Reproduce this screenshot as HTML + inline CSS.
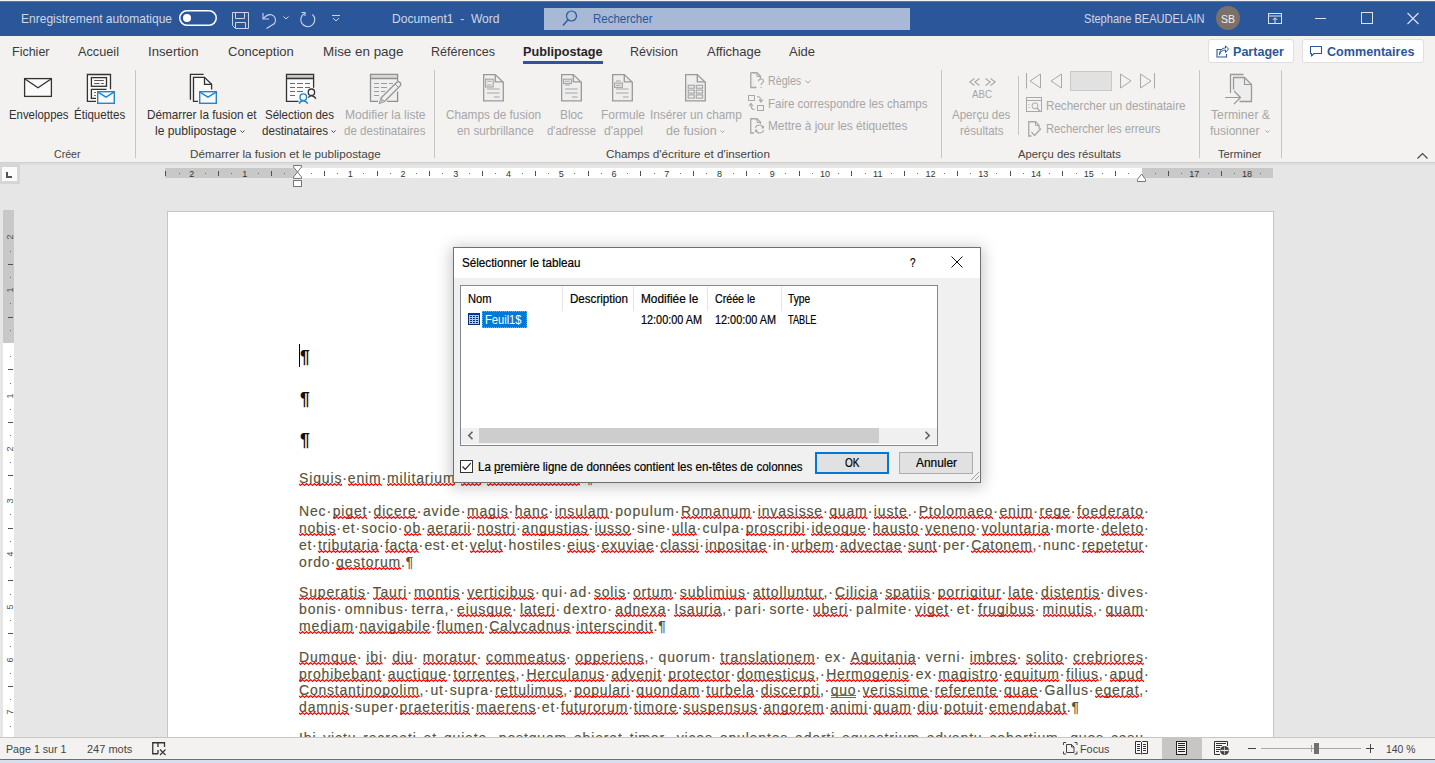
<!DOCTYPE html>
<html><head><meta charset="utf-8"><style>
html,body{margin:0;padding:0;}
body{width:1435px;height:763px;overflow:hidden;position:relative;background:#e6e6e6;font-family:'Liberation Sans', sans-serif;}
svg{overflow:visible;position:absolute}
.ln{position:absolute;left:299px;font-size:14px;line-height:17px;white-space:pre;color:#57533b;letter-spacing:0.85px;-webkit-text-stroke:0.15px #57533b}
.sq{position:relative}
.sqs{position:absolute;left:0;top:13px;width:100%;height:3px;overflow:hidden}
.bl{text-decoration:underline double #3d6fc4;text-decoration-thickness:1px;text-underline-offset:2px}
</style></head><body>
<div style="position:absolute;left:0px;top:0px;width:1435px;height:1px;background:#f2f2f2"></div>
<div style="position:absolute;left:0px;top:1px;width:1435px;height:1px;background:#77726d"></div>
<div style="position:absolute;left:0px;top:2px;width:1435px;height:34px;background:#2b579a"></div>
<div style="position:absolute;left:21.00px;top:12.03px;font-size:13px;line-height:14.937px;white-space:pre;color:#cdd7e7;font-weight:400;transform:scaleX(0.9246);transform-origin:0 0;">Enregistrement automatique</div>
<svg style="position:absolute;left:179px;top:10px;" width="38" height="16" viewBox="0 0 38 16" fill="none"><rect x="0.75" y="0.75" width="36.5" height="14.5" rx="7.25" stroke="#fff" stroke-width="1.5"/><circle cx="8" cy="8" r="4" fill="#fff"/></svg>
<svg style="position:absolute;left:232px;top:12px;" width="17" height="17" viewBox="0 0 17 17" fill="none"><path d="M0.5 0.5H16.5V16.5H3.5L0.5 13.5Z M3.5 0.5V6.5H12.5V0.5 M3.5 16.5V10.5H13.5V16.5" stroke="#c9d5e8" stroke-width="1"/></svg>
<svg style="position:absolute;left:261px;top:11px;" width="18" height="18" viewBox="0 0 18 18" fill="none"><path d="M2 2V8H8" stroke="#c9d5e8" stroke-width="1.1"/><path d="M2.3 7.7C5 4.5 8 3.2 10.5 3.8C14.5 4.8 15.5 9.5 13.5 12.5L5.5 17.5" stroke="#c9d5e8" stroke-width="1.1"/></svg>
<svg style="position:absolute;left:283px;top:16px;" width="6" height="4" viewBox="0 0 6 4" fill="none"><path d="M0.5 0.5L3 3L5.5 0.5" stroke="#c9d5e8" stroke-width="1"/></svg>
<svg style="position:absolute;left:299px;top:11px;" width="18" height="18" viewBox="0 0 18 18" fill="none"><path d="M5.5 2.5 A7 7 0 1 0 13.5 3.5" stroke="#c9d5e8" stroke-width="1.1" fill="none"/><path d="M2.5 1.5H6V5" stroke="#c9d5e8" stroke-width="1.1"/></svg>
<svg style="position:absolute;left:332px;top:15px;" width="9" height="7" viewBox="0 0 9 7" fill="none"><path d="M0 0.5H8 M1 3L4 6L7 3" stroke="#c9d5e8" stroke-width="1"/></svg>
<div style="position:absolute;left:391.50px;top:12.03px;font-size:13px;line-height:14.937px;white-space:pre;color:#cdd7e7;font-weight:400;transform:scaleX(0.9260);transform-origin:0 0;">Document1  -  Word</div>
<div style="position:absolute;left:544px;top:8px;width:366px;height:22px;background:#a7b9d4"></div>
<svg style="position:absolute;left:562px;top:10px;" width="16" height="17" viewBox="0 0 16 17" fill="none"><circle cx="9.5" cy="6" r="5" stroke="#2b579a" stroke-width="1.2"/><path d="M6 9.8L1 15.5" stroke="#2b579a" stroke-width="1.3"/></svg>
<div style="position:absolute;left:593.00px;top:12.03px;font-size:13px;line-height:14.937px;white-space:pre;color:#2b579a;font-weight:400;transform:scaleX(0.8854);transform-origin:0 0;">Rechercher</div>
<div style="position:absolute;left:1084.00px;top:12.03px;font-size:13px;line-height:14.937px;white-space:pre;color:#cdd7e7;font-weight:400;transform:scaleX(0.8507);transform-origin:0 0;">Stephane BEAUDELAIN</div>
<div style="position:absolute;left:1216px;top:6px;width:24px;height:24px;border-radius:12px;background:#7c706a"></div>
<div style="position:absolute;left:1221.00px;top:13.37px;font-size:11px;line-height:12.639px;white-space:pre;color:#f4f0ec;font-weight:400;transform:scaleX(0.9532);transform-origin:0 0;">SB</div>
<svg style="position:absolute;left:1268px;top:13px;" width="14" height="11" viewBox="0 0 14 11" fill="none"><rect x="0.5" y="0.5" width="13" height="10" stroke="#dbe3ef"/><path d="M0.5 3H13.5 M7 10V5 M4.8 7L7 4.8L9.2 7" stroke="#dbe3ef"/></svg>
<div style="position:absolute;left:1315px;top:18px;width:11px;height:1px;background:#dbe3ef"></div>
<div style="position:absolute;left:1361px;top:12px;width:12px;height:12px;border:1px solid #dbe3ef;box-sizing:border-box"></div>
<svg style="position:absolute;left:1407px;top:13px;" width="12" height="11" viewBox="0 0 12 11" fill="none"><path d="M0.5 0L11.5 11M11.5 0L0.5 11" stroke="#dbe3ef" stroke-width="1.1"/></svg>
<div style="position:absolute;left:0px;top:36px;width:1435px;height:126px;background:#f3f2f1"></div>
<div style="position:absolute;left:11.50px;top:44.93px;font-size:13px;line-height:14.937px;white-space:pre;color:#3b3a39;font-weight:400;transform:scaleX(0.9612);transform-origin:0 0;">Fichier</div>
<div style="position:absolute;left:77.50px;top:44.93px;font-size:13px;line-height:14.937px;white-space:pre;color:#3b3a39;font-weight:400;transform:scaleX(0.9780);transform-origin:0 0;">Accueil</div>
<div style="position:absolute;left:147.50px;top:44.93px;font-size:13px;line-height:14.937px;white-space:pre;color:#3b3a39;font-weight:400;transform:scaleX(1.0125);transform-origin:0 0;">Insertion</div>
<div style="position:absolute;left:228.00px;top:44.93px;font-size:13px;line-height:14.937px;white-space:pre;color:#3b3a39;font-weight:400;">Conception</div>
<div style="position:absolute;left:322.50px;top:44.93px;font-size:13px;line-height:14.937px;white-space:pre;color:#3b3a39;font-weight:400;transform:scaleX(1.0312);transform-origin:0 0;">Mise en page</div>
<div style="position:absolute;left:431.00px;top:44.93px;font-size:13px;line-height:14.937px;white-space:pre;color:#3b3a39;font-weight:400;transform:scaleX(0.9626);transform-origin:0 0;">Références</div>
<div style="position:absolute;left:630.00px;top:44.93px;font-size:13px;line-height:14.937px;white-space:pre;color:#3b3a39;font-weight:400;transform:scaleX(0.9627);transform-origin:0 0;">Révision</div>
<div style="position:absolute;left:707.00px;top:44.93px;font-size:13px;line-height:14.937px;white-space:pre;color:#3b3a39;font-weight:400;">Affichage</div>
<div style="position:absolute;left:789.00px;top:44.93px;font-size:13px;line-height:14.937px;white-space:pre;color:#3b3a39;font-weight:400;">Aide</div>
<div style="position:absolute;left:523.30px;top:44.93px;font-size:13px;line-height:14.937px;white-space:pre;color:#262626;font-weight:700;transform:scaleX(0.9740);transform-origin:0 0;">Publipostage</div>
<div style="position:absolute;left:523px;top:61px;width:80px;height:3px;background:#2b579a"></div>
<div style="position:absolute;left:1208px;top:39px;width:86px;height:24px;background:#fff;border:1px solid #e1dfdd;border-radius:3px;box-sizing:border-box"></div>
<div style="position:absolute;left:1302px;top:39px;width:122px;height:24px;background:#fff;border:1px solid #e1dfdd;border-radius:3px;box-sizing:border-box"></div>
<svg style="position:absolute;left:1216px;top:45px;" width="13" height="13" viewBox="0 0 13 13" fill="none"><path d="M5.5 4.5H1V12H10.5V9" stroke="#2b579a" stroke-width="1.1"/><path d="M3.5 10C4 6.5 6.5 5 9.5 5V7.5L12.5 4L9.5 0.8V3C6 3 3.5 5.5 3.5 10Z" stroke="#2b579a" stroke-width="1" stroke-linejoin="round"/></svg>
<div style="position:absolute;left:1233.00px;top:43.57px;font-size:13.5px;line-height:15.511px;white-space:pre;color:#2b579a;font-weight:700;transform:scaleX(0.9310);transform-origin:0 0;">Partager</div>
<svg style="position:absolute;left:1310px;top:46px;" width="12" height="11" viewBox="0 0 12 11" fill="none"><path d="M0.5 0.5H11.5V7.5H4L1.5 10V7.5H0.5Z" stroke="#2b579a" stroke-width="1.1" stroke-linejoin="round"/></svg>
<div style="position:absolute;left:1326.50px;top:43.57px;font-size:13.5px;line-height:15.511px;white-space:pre;color:#2b579a;font-weight:700;transform:scaleX(0.9329);transform-origin:0 0;">Commentaires</div>
<div style="position:absolute;left:135px;top:70px;width:1px;height:88px;background:#c8c6c4"></div>
<div style="position:absolute;left:434px;top:70px;width:1px;height:88px;background:#c8c6c4"></div>
<div style="position:absolute;left:941px;top:70px;width:1px;height:88px;background:#c8c6c4"></div>
<div style="position:absolute;left:1199px;top:70px;width:1px;height:88px;background:#c8c6c4"></div>
<div style="position:absolute;left:1281px;top:70px;width:1px;height:88px;background:#c8c6c4"></div>
<div style="position:absolute;left:1018px;top:76px;width:1px;height:59px;background:#c8c6c4"></div>
<svg style="position:absolute;left:20px;top:70px;" width="40" height="36" viewBox="0 0 40 36" fill="none"><rect x="4.6" y="8.6" width="26.8" height="17.8" fill="#fafafa" stroke="#333" stroke-width="1.3"/><path d="M5 9L18 17.7L31 9" stroke="#333" stroke-width="1.3"/></svg>
<svg style="position:absolute;left:82px;top:70px;" width="40" height="36" viewBox="0 0 40 36" fill="none"><path d="M5.4 4.5H28.5V31.4H5.4Z" fill="#fafafa"/><path d="M14 31.4H5.4V4.5H28.5V19.3" stroke="#333" stroke-width="1.3"/><rect x="9.4" y="7.6" width="15.1" height="8.7" stroke="#333" stroke-width="1.3"/><path d="M12.2 10.5H21.8M12.2 13.5H17.6M19.3 13.5H21.8" stroke="#555" stroke-width="1.2"/><path d="M14 28.3H9.4V19.3H24.5" stroke="#333" stroke-width="1.3"/><path d="M12.2 22.5H13.8M12.2 25.5H13.8" stroke="#555" stroke-width="1.2"/><rect x="15.7" y="21.7" width="16.6" height="11.6" fill="#fafafa" stroke="#1f86d0" stroke-width="1.4"/><path d="M16 22.2L24 27.2L32 22.2" stroke="#1f86d0" stroke-width="1.4"/></svg>
<div style="position:absolute;left:8.50px;top:108.03px;font-size:13px;line-height:14.937px;white-space:pre;color:#323130;font-weight:400;transform:scaleX(0.8756);transform-origin:0 0;">Enveloppes</div>
<div style="position:absolute;left:73.50px;top:108.03px;font-size:13px;line-height:14.937px;white-space:pre;color:#323130;font-weight:400;transform:scaleX(0.8854);transform-origin:0 0;">Étiquettes</div>
<div style="position:absolute;left:53.70px;top:147.81px;font-size:11.5px;line-height:13.213px;white-space:pre;color:#444444;font-weight:400;transform:scaleX(0.9212);transform-origin:0 0;">Créer</div>
<svg style="position:absolute;left:184px;top:70px;" width="40" height="36" viewBox="0 0 40 36" fill="none"><path d="M9.5 7.3H20.5L27.6 14.3V31.4H9.5Z" fill="#fafafa"/><path d="M6.4 29.7V4.3H19.6" stroke="#333" stroke-width="1.3"/><path d="M14 31.4H9.5V7.3H20.5L27.6 14.3V19.5" stroke="#333" stroke-width="1.3" stroke-linejoin="miter"/><path d="M20.5 7.3V14.3H27.6" stroke="#333" stroke-width="1.3"/><rect x="15.7" y="21.7" width="16.6" height="11.6" fill="#fafafa" stroke="#1f86d0" stroke-width="1.4"/><path d="M16 22.2L24 27.2L32 22.2" stroke="#1f86d0" stroke-width="1.4"/></svg>
<svg style="position:absolute;left:280px;top:70px;" width="40" height="36" viewBox="0 0 40 36" fill="none"><rect x="6.5" y="8.5" width="27" height="23" fill="#fafafa"/><rect x="6.5" y="4.5" width="27" height="4" fill="#c8c8c8"/><path d="M18.5 31.4H6.5V4.3H33.6V17.7 M6.5 8.5H33.6" stroke="#333" stroke-width="1.3"/><path d="M10 13.5H15M17 13.5H23M25 13.5H30M10 17.5H15M17 17.5H23M25 17.5H30M10 21.5H15M17 21.5H23M10 25.5H15" stroke="#6a6a6a" stroke-width="1.2"/><circle cx="31.4" cy="22.2" r="3.2" fill="#fafafa" stroke="#333" stroke-width="1.3"/><path d="M28.3 27.6C29.2 26.4 30.2 25.9 31.6 25.9C33.2 25.9 34.8 26.8 35.8 28.8" stroke="#333" stroke-width="1.3"/><circle cx="23.3" cy="27.2" r="3.3" fill="#fafafa" stroke="#1f86d0" stroke-width="1.4"/><path d="M19.1 33.7C20 31.6 21.5 30.7 23.3 30.7C25.1 30.7 26.7 31.6 27.7 33.7" stroke="#1f86d0" stroke-width="1.4"/></svg>
<svg style="position:absolute;left:364px;top:70px;" width="40" height="36" viewBox="0 0 40 36" fill="none"><rect x="6.5" y="8.5" width="27" height="23" fill="#efefef"/><rect x="6.5" y="4.5" width="27" height="4" fill="#d8d8d8"/><path d="M14 31.4H6.5V4.3H33.6V11 M6.5 8.5H33.6 M33.6 21.5V31.4H23" stroke="#8f8f8f" stroke-width="1.3"/><path d="M10 13.5H15M17 13.5H23M25 13.5H29M10 17.5H15M17 17.5H23M10 21.5H15M17 21.5H21M10 25.5H15" stroke="#9c9c9c" stroke-width="1.2"/><path d="M15.3 33.5L17 28L32.5 12.5C33.5 11.5 35 11.5 36 12.5C37 13.5 37 15 36 16L20.5 31.5Z" fill="#efefef" stroke="#8f8f8f" stroke-width="1.1" stroke-linejoin="round"/><path d="M17 28L20.5 31.5 M31 14L34.5 17.5" stroke="#8f8f8f" stroke-width="1"/><path d="M15.3 33.5L17 28L20.5 31.5Z" fill="#bdbdbd"/></svg>
<div style="position:absolute;left:146.50px;top:107.73px;font-size:13px;line-height:14.937px;white-space:pre;color:#323130;font-weight:400;transform:scaleX(0.9020);transform-origin:0 0;">Démarrer la fusion et</div>
<div style="position:absolute;left:155.00px;top:124.03px;font-size:13px;line-height:14.937px;white-space:pre;color:#323130;font-weight:400;transform:scaleX(0.9318);transform-origin:0 0;">le publipostage</div>
<svg style="position:absolute;left:240px;top:130px;" width="5" height="3" viewBox="0 0 5 3" fill="none"><path d="M0.5 0.5L2.5 2.5L4.5 0.5" stroke="#444" stroke-width="1"/></svg>
<div style="position:absolute;left:265.00px;top:107.73px;font-size:13px;line-height:14.937px;white-space:pre;color:#323130;font-weight:400;transform:scaleX(0.8839);transform-origin:0 0;">Sélection des</div>
<div style="position:absolute;left:261.50px;top:124.03px;font-size:13px;line-height:14.937px;white-space:pre;color:#323130;font-weight:400;transform:scaleX(0.8953);transform-origin:0 0;">destinataires</div>
<svg style="position:absolute;left:331px;top:130px;" width="5" height="3" viewBox="0 0 5 3" fill="none"><path d="M0.5 0.5L2.5 2.5L4.5 0.5" stroke="#444" stroke-width="1"/></svg>
<div style="position:absolute;left:344.70px;top:107.73px;font-size:13px;line-height:14.937px;white-space:pre;color:#a6a6a6;font-weight:400;transform:scaleX(0.9285);transform-origin:0 0;">Modifier la liste</div>
<div style="position:absolute;left:343.60px;top:124.03px;font-size:13px;line-height:14.937px;white-space:pre;color:#a6a6a6;font-weight:400;transform:scaleX(0.8880);transform-origin:0 0;">de destinataires</div>
<div style="position:absolute;left:189.70px;top:147.81px;font-size:11.5px;line-height:13.213px;white-space:pre;color:#444444;font-weight:400;transform:scaleX(1.0147);transform-origin:0 0;">Démarrer la fusion et le publipostage</div>
<svg style="position:absolute;left:483.2px;top:74.3px;" width="22" height="28" viewBox="0 0 22 28" fill="none"><path d="M0.65 0.65H12.3L20.3 8.3V26.9H0.65Z" fill="#eeeeee" stroke="#999" stroke-width="1.3" stroke-linejoin="miter"/><path d="M12.3 0.65V7.8H20.3" stroke="#999" stroke-width="1.3"/><rect x="2.6" y="5.2" width="7.6" height="7.8" stroke="#a3a3a3" stroke-width="1.1"/><path d="M4 7.2H8.6M4 11H8.6M4 15H16.6M4 19H16.6M10.9 23H16.6" stroke="#a3a3a3" stroke-width="1.1"/></svg>
<svg style="position:absolute;left:561.2px;top:74.3px;" width="22" height="28" viewBox="0 0 22 28" fill="none"><path d="M0.65 0.65H12.3L20.3 8.3V26.9H0.65Z" fill="#eeeeee" stroke="#999" stroke-width="1.3" stroke-linejoin="miter"/><path d="M12.3 0.65V7.8H20.3" stroke="#999" stroke-width="1.3"/><rect x="2.6" y="5.2" width="7.8" height="4.3" stroke="#a3a3a3" stroke-width="1.1"/><path d="M4 7.2H8.8M4 11H8.8M4 15H16.6M4 19H16.6M10.9 23H16.6" stroke="#a3a3a3" stroke-width="1.1"/></svg>
<svg style="position:absolute;left:612.1px;top:74.3px;" width="22" height="28" viewBox="0 0 22 28" fill="none"><path d="M0.65 0.65H12.3L20.3 8.3V26.9H0.65Z" fill="#eeeeee" stroke="#999" stroke-width="1.3" stroke-linejoin="miter"/><path d="M12.3 0.65V7.8H20.3" stroke="#999" stroke-width="1.3"/><rect x="2.6" y="9.1" width="7.8" height="4.3" stroke="#a3a3a3" stroke-width="1.1"/><path d="M4 7H8.8M4 11.2H8.8M4 15H16.6M4 19H16.6M10.9 23H16.6" stroke="#a3a3a3" stroke-width="1.1"/></svg>
<svg style="position:absolute;left:685.1px;top:74.3px;" width="22" height="28" viewBox="0 0 22 28" fill="none"><path d="M0.65 0.65H12.3L20.3 8.3V26.9H0.65Z" fill="#eeeeee" stroke="#999" stroke-width="1.3" stroke-linejoin="miter"/><path d="M12.3 0.65V7.8H20.3" stroke="#999" stroke-width="1.3"/><rect x="3.2" y="11.3" width="6.1" height="2.9" stroke="#a3a3a3" stroke-width="1.1"/><rect x="11.3" y="11.3" width="6.3" height="2.9" stroke="#a3a3a3" stroke-width="1.1"/><rect x="3.2" y="16.1" width="6.1" height="3" stroke="#a3a3a3" stroke-width="1.1"/><rect x="11.3" y="16.1" width="6.3" height="3" stroke="#a3a3a3" stroke-width="1.1"/><rect x="3.2" y="20.9" width="6.1" height="3.2" stroke="#a3a3a3" stroke-width="1.1"/><rect x="11.3" y="20.9" width="6.3" height="3.2" stroke="#a3a3a3" stroke-width="1.1"/></svg>
<div style="position:absolute;left:446.40px;top:107.73px;font-size:13px;line-height:14.937px;white-space:pre;color:#a6a6a6;font-weight:400;transform:scaleX(0.9067);transform-origin:0 0;">Champs de fusion</div>
<div style="position:absolute;left:456.50px;top:124.03px;font-size:13px;line-height:14.937px;white-space:pre;color:#a6a6a6;font-weight:400;transform:scaleX(0.9072);transform-origin:0 0;">en surbrillance</div>
<div style="position:absolute;left:560.00px;top:107.73px;font-size:13px;line-height:14.937px;white-space:pre;color:#a6a6a6;font-weight:400;transform:scaleX(0.9092);transform-origin:0 0;">Bloc</div>
<div style="position:absolute;left:547.00px;top:124.03px;font-size:13px;line-height:14.937px;white-space:pre;color:#a6a6a6;font-weight:400;transform:scaleX(0.8755);transform-origin:0 0;">d&#x27;adresse</div>
<div style="position:absolute;left:601.00px;top:107.73px;font-size:13px;line-height:14.937px;white-space:pre;color:#a6a6a6;font-weight:400;transform:scaleX(0.9227);transform-origin:0 0;">Formule</div>
<div style="position:absolute;left:604.00px;top:124.03px;font-size:13px;line-height:14.937px;white-space:pre;color:#a6a6a6;font-weight:400;transform:scaleX(0.9391);transform-origin:0 0;">d&#x27;appel</div>
<div style="position:absolute;left:650.00px;top:107.73px;font-size:13px;line-height:14.937px;white-space:pre;color:#a6a6a6;font-weight:400;transform:scaleX(0.9064);transform-origin:0 0;">Insérer un champ</div>
<div style="position:absolute;left:666.00px;top:124.03px;font-size:13px;line-height:14.937px;white-space:pre;color:#a6a6a6;font-weight:400;transform:scaleX(0.9627);transform-origin:0 0;">de fusion</div>
<svg style="position:absolute;left:720px;top:130px;" width="5" height="3" viewBox="0 0 5 3" fill="none"><path d="M0.5 0.5L2.5 2.5L4.5 0.5" stroke="#a6a6a6" stroke-width="1"/></svg>
<div style="position:absolute;left:606.40px;top:147.81px;font-size:11.5px;line-height:13.213px;white-space:pre;color:#444444;font-weight:400;transform:scaleX(1.0180);transform-origin:0 0;">Champs d&#x27;écriture et d&#x27;insertion</div>
<svg style="position:absolute;left:750px;top:72px;" width="14" height="17" viewBox="0 0 14 17" fill="none"><path d="M0.75 0.75H7L10.5 4.25V7 M6.5 15.5H0.75V0.75" stroke="#a8a8a8" stroke-width="1.3" fill="#ececec"/><path d="M7 0.75V4.5H10.5" stroke="#a8a8a8"/><path d="M8.5 9.5C8.5 7.8 9.5 7 11 7C12.5 7 13.5 7.8 13.5 9C13.5 10.8 11 11 11 13 M11 15V16" stroke="#a8a8a8" stroke-width="1.1"/></svg>
<div style="position:absolute;left:767.50px;top:73.73px;font-size:13px;line-height:14.937px;white-space:pre;color:#a6a6a6;font-weight:400;transform:scaleX(0.8204);transform-origin:0 0;">Règles</div>
<svg style="position:absolute;left:805px;top:80px;" width="6" height="4" viewBox="0 0 6 4" fill="none"><path d="M0.5 0.5L3 3L5.5 0.5" stroke="#a6a6a6"/></svg>
<svg style="position:absolute;left:748px;top:95px;" width="17" height="17" viewBox="0 0 17 17" fill="none"><rect x="0.5" y="0.5" width="6" height="5" stroke="#a8a8a8"/><rect x="9.5" y="10.5" width="6" height="5" stroke="#a8a8a8"/><path d="M9 1.5C12 1.5 13 3 13 6.5 M11 4.5L13 7L15 4.5 M6.5 14.5C3.5 14.5 3 12.5 3 9.5 M1 11L3 8.5L5 11" stroke="#a8a8a8" stroke-width="1.1"/></svg>
<div style="position:absolute;left:767.50px;top:96.73px;font-size:13px;line-height:14.937px;white-space:pre;color:#a6a6a6;font-weight:400;transform:scaleX(0.8901);transform-origin:0 0;">Faire correspondre les champs</div>
<svg style="position:absolute;left:750px;top:118px;" width="15" height="16" viewBox="0 0 15 16" fill="none"><path d="M4 15H0.75V0.75H7L10.5 4.25V6" stroke="#a8a8a8" stroke-width="1.3"/><path d="M7 0.75V4.5H10.5" stroke="#a8a8a8"/><path d="M5.5 10C5.8 8 7.3 7 9.3 7C11 7 12.5 8 13 9.5 M13.5 8V10H11.5 M13.5 12C13.2 14 11.7 15 9.7 15C8 15 6.5 14 6 12.5 M5.5 14V12H7.5" stroke="#a8a8a8" stroke-width="1.1"/></svg>
<div style="position:absolute;left:767.50px;top:119.43px;font-size:13px;line-height:14.937px;white-space:pre;color:#a6a6a6;font-weight:400;transform:scaleX(0.9093);transform-origin:0 0;">Mettre à jour les étiquettes</div>
<svg style="position:absolute;left:969px;top:78px;" width="27" height="8" viewBox="0 0 27 8" fill="none"><path d="M5.5 0.5L0.8 4L5.5 7.5M10.5 0.5L5.8 4L10.5 7.5M16.5 0.5L21.2 4L16.5 7.5M21.5 0.5L26.2 4L21.5 7.5" stroke="#a8a8a8" stroke-width="1.1"/></svg>
<div style="position:absolute;left:972.00px;top:87.67px;font-size:11px;line-height:12.639px;white-space:pre;color:#a6a6a6;font-weight:400;transform:scaleX(0.8840);transform-origin:0 0;">ABC</div>
<div style="position:absolute;left:952.30px;top:107.53px;font-size:13px;line-height:14.937px;white-space:pre;color:#a6a6a6;font-weight:400;transform:scaleX(0.8880);transform-origin:0 0;">Aperçu des</div>
<div style="position:absolute;left:960.30px;top:123.53px;font-size:13px;line-height:14.937px;white-space:pre;color:#a6a6a6;font-weight:400;transform:scaleX(0.8852);transform-origin:0 0;">résultats</div>
<svg style="position:absolute;left:1026px;top:73px;" width="16" height="16" viewBox="0 0 16 16" fill="none"><path d="M0.5 0V15.5" stroke="#a8a8a8"/><path d="M14.5 1L4 8L14.5 15Z" stroke="#a8a8a8" stroke-linejoin="round"/></svg>
<svg style="position:absolute;left:1050px;top:73px;" width="13" height="16" viewBox="0 0 13 16" fill="none"><path d="M11.5 1L1 8L11.5 15Z" stroke="#a8a8a8" stroke-linejoin="round"/></svg>
<div style="position:absolute;left:1070px;top:71px;width:42px;height:20px;background:#e1e1e1;border:1px solid #c8c8c8;box-sizing:border-box"></div>
<svg style="position:absolute;left:1120px;top:73px;" width="12" height="16" viewBox="0 0 12 16" fill="none"><path d="M0.5 1L11 8L0.5 15Z" stroke="#a8a8a8" stroke-linejoin="round"/></svg>
<svg style="position:absolute;left:1140px;top:73px;" width="16" height="16" viewBox="0 0 16 16" fill="none"><path d="M0.5 1L11 8L0.5 15Z" stroke="#a8a8a8" stroke-linejoin="round"/><path d="M14.5 0V15.5" stroke="#a8a8a8"/></svg>
<svg style="position:absolute;left:1026px;top:97px;" width="17" height="17" viewBox="0 0 17 17" fill="none"><rect x="0.5" y="0.5" width="15" height="14" stroke="#a8a8a8"/><path d="M0.5 3.5H15.5 M3 7V8 M3 10V11" stroke="#a8a8a8"/><circle cx="9" cy="8.8" r="3" stroke="#a8a8a8"/><path d="M11.2 11L14.5 14.8" stroke="#a8a8a8" stroke-width="1.2"/></svg>
<div style="position:absolute;left:1045.50px;top:98.53px;font-size:13px;line-height:14.937px;white-space:pre;color:#a6a6a6;font-weight:400;transform:scaleX(0.8937);transform-origin:0 0;">Rechercher un destinataire</div>
<svg style="position:absolute;left:1028px;top:121px;" width="14" height="17" viewBox="0 0 14 17" fill="none"><path d="M3.5 15H0.75V0.75H7.5L11 4.25V8" stroke="#a8a8a8" stroke-width="1.3"/><path d="M7.5 0.75V4.5H11" stroke="#a8a8a8"/><path d="M3.5 11L6.5 14.5L13 7.5" stroke="#a8a8a8" stroke-width="1.2"/></svg>
<div style="position:absolute;left:1045.50px;top:122.43px;font-size:13px;line-height:14.937px;white-space:pre;color:#a6a6a6;font-weight:400;transform:scaleX(0.8645);transform-origin:0 0;">Rechercher les erreurs</div>
<div style="position:absolute;left:1018.30px;top:147.81px;font-size:11.5px;line-height:13.213px;white-space:pre;color:#444444;font-weight:400;transform:scaleX(0.9815);transform-origin:0 0;">Aperçu des résultats</div>
<svg style="position:absolute;left:1220px;top:70px;" width="34" height="36" viewBox="0 0 34 36" fill="none"><path d="M13.5 19.5V7.5H24.5L31.5 14.5V31.5H19.5" fill="#ededed" stroke="#999" stroke-width="1.3" stroke-linejoin="miter"/><path d="M10.5 23V4.5H23.5" stroke="#999" stroke-width="1.3"/><path d="M24.5 7.5V14.5H31.5" stroke="#999" stroke-width="1.2"/><path d="M5 27.5H21 M14 21L20.5 27.5L14 34" stroke="#999" stroke-width="1.2"/></svg>
<div style="position:absolute;left:1211.00px;top:108.03px;font-size:13px;line-height:14.937px;white-space:pre;color:#a6a6a6;font-weight:400;transform:scaleX(0.9386);transform-origin:0 0;">Terminer &amp;</div>
<div style="position:absolute;left:1210.00px;top:123.63px;font-size:13px;line-height:14.937px;white-space:pre;color:#a6a6a6;font-weight:400;transform:scaleX(0.9236);transform-origin:0 0;">fusionner</div>
<svg style="position:absolute;left:1265px;top:130px;" width="5" height="3" viewBox="0 0 5 3" fill="none"><path d="M0.5 0.5L2.5 2.5L4.5 0.5" stroke="#a6a6a6"/></svg>
<div style="position:absolute;left:1218.40px;top:148.11px;font-size:11.5px;line-height:13.213px;white-space:pre;color:#444444;font-weight:400;transform:scaleX(0.9746);transform-origin:0 0;">Terminer</div>
<svg style="position:absolute;left:1417px;top:153px;" width="11" height="6" viewBox="0 0 11 6" fill="none"><path d="M0.5 5.5L5.5 0.5L10.5 5.5" stroke="#444" stroke-width="1.1"/></svg>
<div style="position:absolute;left:0px;top:162px;width:1435px;height:1px;background:#d2d1d0"></div>
<div style="position:absolute;left:0px;top:163px;width:1435px;height:2px;background:#dedddc"></div>
<div style="position:absolute;left:0px;top:163px;width:20px;height:21px;background:#d6d6d6"></div>
<div style="position:absolute;left:2px;top:167px;width:15px;height:14px;background:#fbfbfb"></div>
<div style="position:absolute;left:6px;top:172px;width:2px;height:6px;background:#555"></div>
<div style="position:absolute;left:6px;top:176px;width:6px;height:2px;background:#555"></div>
<div style="position:absolute;left:165px;top:168px;width:132px;height:10px;background:#c8c8c8"></div>
<div style="position:absolute;left:297px;top:168px;width:845px;height:10px;background:#fff"></div>
<div style="position:absolute;left:1142px;top:168px;width:131px;height:10px;background:#c8c8c8"></div>
<div style="position:absolute;left:165px;top:171px;width:1px;height:5px;background:#505050"></div>
<div style="position:absolute;left:178.5px;top:172.5px;width:1.6px;height:1.6px;background:#707070"></div>
<div style="position:absolute;left:189.37px;top:168.71px;font-size:9px;line-height:10.341px;white-space:pre;color:#333;font-weight:400;">2</div>
<div style="position:absolute;left:204.5px;top:172.5px;width:1.6px;height:1.6px;background:#707070"></div>
<div style="position:absolute;left:218px;top:171px;width:1px;height:5px;background:#505050"></div>
<div style="position:absolute;left:230.5px;top:172.5px;width:1.6px;height:1.6px;background:#707070"></div>
<div style="position:absolute;left:242.13px;top:168.71px;font-size:9px;line-height:10.341px;white-space:pre;color:#333;font-weight:400;">1</div>
<div style="position:absolute;left:257.5px;top:172.5px;width:1.6px;height:1.6px;background:#707070"></div>
<div style="position:absolute;left:271px;top:171px;width:1px;height:5px;background:#505050"></div>
<div style="position:absolute;left:283.5px;top:172.5px;width:1.6px;height:1.6px;background:#707070"></div>
<div style="position:absolute;left:310.5px;top:172.5px;width:1.6px;height:1.6px;background:#707070"></div>
<div style="position:absolute;left:324px;top:171px;width:1px;height:5px;background:#505050"></div>
<div style="position:absolute;left:336.5px;top:172.5px;width:1.6px;height:1.6px;background:#707070"></div>
<div style="position:absolute;left:347.65px;top:168.71px;font-size:9px;line-height:10.341px;white-space:pre;color:#333;font-weight:400;">1</div>
<div style="position:absolute;left:362.5px;top:172.5px;width:1.6px;height:1.6px;background:#707070"></div>
<div style="position:absolute;left:377px;top:171px;width:1px;height:5px;background:#505050"></div>
<div style="position:absolute;left:389.5px;top:172.5px;width:1.6px;height:1.6px;background:#707070"></div>
<div style="position:absolute;left:400.41px;top:168.71px;font-size:9px;line-height:10.341px;white-space:pre;color:#333;font-weight:400;">2</div>
<div style="position:absolute;left:415.5px;top:172.5px;width:1.6px;height:1.6px;background:#707070"></div>
<div style="position:absolute;left:429px;top:171px;width:1px;height:5px;background:#505050"></div>
<div style="position:absolute;left:441.5px;top:172.5px;width:1.6px;height:1.6px;background:#707070"></div>
<div style="position:absolute;left:453.17px;top:168.71px;font-size:9px;line-height:10.341px;white-space:pre;color:#333;font-weight:400;">3</div>
<div style="position:absolute;left:468.5px;top:172.5px;width:1.6px;height:1.6px;background:#707070"></div>
<div style="position:absolute;left:482px;top:171px;width:1px;height:5px;background:#505050"></div>
<div style="position:absolute;left:494.5px;top:172.5px;width:1.6px;height:1.6px;background:#707070"></div>
<div style="position:absolute;left:505.93px;top:168.71px;font-size:9px;line-height:10.341px;white-space:pre;color:#333;font-weight:400;">4</div>
<div style="position:absolute;left:521.5px;top:172.5px;width:1.6px;height:1.6px;background:#707070"></div>
<div style="position:absolute;left:535px;top:171px;width:1px;height:5px;background:#505050"></div>
<div style="position:absolute;left:547.5px;top:172.5px;width:1.6px;height:1.6px;background:#707070"></div>
<div style="position:absolute;left:558.69px;top:168.71px;font-size:9px;line-height:10.341px;white-space:pre;color:#333;font-weight:400;">5</div>
<div style="position:absolute;left:573.5px;top:172.5px;width:1.6px;height:1.6px;background:#707070"></div>
<div style="position:absolute;left:588px;top:171px;width:1px;height:5px;background:#505050"></div>
<div style="position:absolute;left:600.5px;top:172.5px;width:1.6px;height:1.6px;background:#707070"></div>
<div style="position:absolute;left:611.45px;top:168.71px;font-size:9px;line-height:10.341px;white-space:pre;color:#333;font-weight:400;">6</div>
<div style="position:absolute;left:626.5px;top:172.5px;width:1.6px;height:1.6px;background:#707070"></div>
<div style="position:absolute;left:640px;top:171px;width:1px;height:5px;background:#505050"></div>
<div style="position:absolute;left:653.5px;top:172.5px;width:1.6px;height:1.6px;background:#707070"></div>
<div style="position:absolute;left:664.21px;top:168.71px;font-size:9px;line-height:10.341px;white-space:pre;color:#333;font-weight:400;">7</div>
<div style="position:absolute;left:679.5px;top:172.5px;width:1.6px;height:1.6px;background:#707070"></div>
<div style="position:absolute;left:693px;top:171px;width:1px;height:5px;background:#505050"></div>
<div style="position:absolute;left:705.5px;top:172.5px;width:1.6px;height:1.6px;background:#707070"></div>
<div style="position:absolute;left:716.97px;top:168.71px;font-size:9px;line-height:10.341px;white-space:pre;color:#333;font-weight:400;">8</div>
<div style="position:absolute;left:732.5px;top:172.5px;width:1.6px;height:1.6px;background:#707070"></div>
<div style="position:absolute;left:746px;top:171px;width:1px;height:5px;background:#505050"></div>
<div style="position:absolute;left:758.5px;top:172.5px;width:1.6px;height:1.6px;background:#707070"></div>
<div style="position:absolute;left:769.73px;top:168.71px;font-size:9px;line-height:10.341px;white-space:pre;color:#333;font-weight:400;">9</div>
<div style="position:absolute;left:784.5px;top:172.5px;width:1.6px;height:1.6px;background:#707070"></div>
<div style="position:absolute;left:799px;top:171px;width:1px;height:5px;background:#505050"></div>
<div style="position:absolute;left:811.5px;top:172.5px;width:1.6px;height:1.6px;background:#707070"></div>
<div style="position:absolute;left:819.99px;top:168.71px;font-size:9px;line-height:10.341px;white-space:pre;color:#333;font-weight:400;">10</div>
<div style="position:absolute;left:837.5px;top:172.5px;width:1.6px;height:1.6px;background:#707070"></div>
<div style="position:absolute;left:851px;top:171px;width:1px;height:5px;background:#505050"></div>
<div style="position:absolute;left:864.5px;top:172.5px;width:1.6px;height:1.6px;background:#707070"></div>
<div style="position:absolute;left:873.09px;top:168.71px;font-size:9px;line-height:10.341px;white-space:pre;color:#333;font-weight:400;">11</div>
<div style="position:absolute;left:890.5px;top:172.5px;width:1.6px;height:1.6px;background:#707070"></div>
<div style="position:absolute;left:904px;top:171px;width:1px;height:5px;background:#505050"></div>
<div style="position:absolute;left:916.5px;top:172.5px;width:1.6px;height:1.6px;background:#707070"></div>
<div style="position:absolute;left:925.51px;top:168.71px;font-size:9px;line-height:10.341px;white-space:pre;color:#333;font-weight:400;">12</div>
<div style="position:absolute;left:943.5px;top:172.5px;width:1.6px;height:1.6px;background:#707070"></div>
<div style="position:absolute;left:957px;top:171px;width:1px;height:5px;background:#505050"></div>
<div style="position:absolute;left:969.5px;top:172.5px;width:1.6px;height:1.6px;background:#707070"></div>
<div style="position:absolute;left:978.27px;top:168.71px;font-size:9px;line-height:10.341px;white-space:pre;color:#333;font-weight:400;">13</div>
<div style="position:absolute;left:995.5px;top:172.5px;width:1.6px;height:1.6px;background:#707070"></div>
<div style="position:absolute;left:1010px;top:171px;width:1px;height:5px;background:#505050"></div>
<div style="position:absolute;left:1022.5px;top:172.5px;width:1.6px;height:1.6px;background:#707070"></div>
<div style="position:absolute;left:1031.03px;top:168.71px;font-size:9px;line-height:10.341px;white-space:pre;color:#333;font-weight:400;">14</div>
<div style="position:absolute;left:1048.5px;top:172.5px;width:1.6px;height:1.6px;background:#707070"></div>
<div style="position:absolute;left:1062px;top:171px;width:1px;height:5px;background:#505050"></div>
<div style="position:absolute;left:1075.5px;top:172.5px;width:1.6px;height:1.6px;background:#707070"></div>
<div style="position:absolute;left:1083.79px;top:168.71px;font-size:9px;line-height:10.341px;white-space:pre;color:#333;font-weight:400;">15</div>
<div style="position:absolute;left:1101.5px;top:172.5px;width:1.6px;height:1.6px;background:#707070"></div>
<div style="position:absolute;left:1115px;top:171px;width:1px;height:5px;background:#505050"></div>
<div style="position:absolute;left:1127.5px;top:172.5px;width:1.6px;height:1.6px;background:#707070"></div>
<div style="position:absolute;left:1154.5px;top:172.5px;width:1.6px;height:1.6px;background:#707070"></div>
<div style="position:absolute;left:1168px;top:171px;width:1px;height:5px;background:#505050"></div>
<div style="position:absolute;left:1180.5px;top:172.5px;width:1.6px;height:1.6px;background:#707070"></div>
<div style="position:absolute;left:1189.31px;top:168.71px;font-size:9px;line-height:10.341px;white-space:pre;color:#333;font-weight:400;">17</div>
<div style="position:absolute;left:1207.5px;top:172.5px;width:1.6px;height:1.6px;background:#707070"></div>
<div style="position:absolute;left:1221px;top:171px;width:1px;height:5px;background:#505050"></div>
<div style="position:absolute;left:1233.5px;top:172.5px;width:1.6px;height:1.6px;background:#707070"></div>
<div style="position:absolute;left:1242.07px;top:168.71px;font-size:9px;line-height:10.341px;white-space:pre;color:#333;font-weight:400;">18</div>
<div style="position:absolute;left:1259.5px;top:172.5px;width:1.6px;height:1.6px;background:#707070"></div>
<svg style="position:absolute;left:293px;top:165px;" width="10" height="23" viewBox="0 0 10 23" fill="none"><path d="M0.5 0.5H8.5V2L4.5 7L8.5 12V13.5H0.5V12L4.5 7L0.5 2Z" fill="#fff" stroke="#777"/><rect x="0.5" y="15.5" width="8" height="6" fill="#fff" stroke="#777"/></svg>
<svg style="position:absolute;left:1137px;top:173px;" width="10" height="9" viewBox="0 0 10 9" fill="none"><path d="M0.5 8.5V6.5L4.5 1L8.5 6.5V8.5Z" fill="#fff" stroke="#777"/></svg>
<div style="position:absolute;left:3px;top:210px;width:11px;height:133px;background:#c8c8c8"></div>
<div style="position:absolute;left:3px;top:343px;width:11px;height:400px;background:#fff"></div>
<div style="position:absolute;left:-0.40000000000000036px;top:231.48000000000002px;width:20px;height:12px;line-height:12px;font-size:9px;text-align:center;color:#505050;transform:rotate(-90deg)">2</div>
<div style="position:absolute;left:9.5px;top:250.7px;width:1.6px;height:1.6px;background:#707070"></div>
<div style="position:absolute;left:8px;top:264px;width:5px;height:1px;background:#505050"></div>
<div style="position:absolute;left:9.5px;top:276.7px;width:1.6px;height:1.6px;background:#707070"></div>
<div style="position:absolute;left:-0.40000000000000036px;top:284.24px;width:20px;height:12px;line-height:12px;font-size:9px;text-align:center;color:#505050;transform:rotate(-90deg)">1</div>
<div style="position:absolute;left:9.5px;top:302.7px;width:1.6px;height:1.6px;background:#707070"></div>
<div style="position:absolute;left:8px;top:317px;width:5px;height:1px;background:#505050"></div>
<div style="position:absolute;left:9.5px;top:329.7px;width:1.6px;height:1.6px;background:#707070"></div>
<div style="position:absolute;left:9.5px;top:355.7px;width:1.6px;height:1.6px;background:#707070"></div>
<div style="position:absolute;left:8px;top:369px;width:5px;height:1px;background:#505050"></div>
<div style="position:absolute;left:9.5px;top:382.7px;width:1.6px;height:1.6px;background:#707070"></div>
<div style="position:absolute;left:-0.40000000000000036px;top:389.76px;width:20px;height:12px;line-height:12px;font-size:9px;text-align:center;color:#505050;transform:rotate(-90deg)">1</div>
<div style="position:absolute;left:9.5px;top:408.7px;width:1.6px;height:1.6px;background:#707070"></div>
<div style="position:absolute;left:8px;top:422px;width:5px;height:1px;background:#505050"></div>
<div style="position:absolute;left:9.5px;top:434.7px;width:1.6px;height:1.6px;background:#707070"></div>
<div style="position:absolute;left:-0.40000000000000036px;top:442.52px;width:20px;height:12px;line-height:12px;font-size:9px;text-align:center;color:#505050;transform:rotate(-90deg)">2</div>
<div style="position:absolute;left:9.5px;top:461.7px;width:1.6px;height:1.6px;background:#707070"></div>
<div style="position:absolute;left:8px;top:475px;width:5px;height:1px;background:#505050"></div>
<div style="position:absolute;left:9.5px;top:487.7px;width:1.6px;height:1.6px;background:#707070"></div>
<div style="position:absolute;left:-0.40000000000000036px;top:495.28px;width:20px;height:12px;line-height:12px;font-size:9px;text-align:center;color:#505050;transform:rotate(-90deg)">3</div>
<div style="position:absolute;left:9.5px;top:513.7px;width:1.6px;height:1.6px;background:#707070"></div>
<div style="position:absolute;left:8px;top:528px;width:5px;height:1px;background:#505050"></div>
<div style="position:absolute;left:9.5px;top:540.7px;width:1.6px;height:1.6px;background:#707070"></div>
<div style="position:absolute;left:-0.40000000000000036px;top:548.04px;width:20px;height:12px;line-height:12px;font-size:9px;text-align:center;color:#505050;transform:rotate(-90deg)">4</div>
<div style="position:absolute;left:9.5px;top:566.7px;width:1.6px;height:1.6px;background:#707070"></div>
<div style="position:absolute;left:8px;top:580px;width:5px;height:1px;background:#505050"></div>
<div style="position:absolute;left:9.5px;top:593.7px;width:1.6px;height:1.6px;background:#707070"></div>
<div style="position:absolute;left:-0.40000000000000036px;top:600.8px;width:20px;height:12px;line-height:12px;font-size:9px;text-align:center;color:#505050;transform:rotate(-90deg)">5</div>
<div style="position:absolute;left:9.5px;top:619.7px;width:1.6px;height:1.6px;background:#707070"></div>
<div style="position:absolute;left:8px;top:633px;width:5px;height:1px;background:#505050"></div>
<div style="position:absolute;left:9.5px;top:645.7px;width:1.6px;height:1.6px;background:#707070"></div>
<div style="position:absolute;left:-0.40000000000000036px;top:653.56px;width:20px;height:12px;line-height:12px;font-size:9px;text-align:center;color:#505050;transform:rotate(-90deg)">6</div>
<div style="position:absolute;left:9.5px;top:672.7px;width:1.6px;height:1.6px;background:#707070"></div>
<div style="position:absolute;left:8px;top:686px;width:5px;height:1px;background:#505050"></div>
<div style="position:absolute;left:9.5px;top:698.7px;width:1.6px;height:1.6px;background:#707070"></div>
<div style="position:absolute;left:-0.40000000000000036px;top:706.3199999999999px;width:20px;height:12px;line-height:12px;font-size:9px;text-align:center;color:#505050;transform:rotate(-90deg)">7</div>
<div style="position:absolute;left:9.5px;top:725.7px;width:1.6px;height:1.6px;background:#707070"></div>
<div style="position:absolute;left:167px;top:211px;width:1107px;height:600px;background:#fff;border:1px solid #c6c6c6;box-sizing:border-box"></div>
<div style="position:absolute;left:299px;top:344px;width:1px;height:23px;background:#000"></div>
<div style="position:absolute;left:299.50px;top:346.00px;font-size:19px;line-height:21.831px;white-space:pre;color:#111;font-weight:700;transform:scaleX(0.9264);transform-origin:0 0;">¶</div>
<div style="position:absolute;left:299.50px;top:388.00px;font-size:19px;line-height:21.831px;white-space:pre;color:#111;font-weight:700;transform:scaleX(0.9264);transform-origin:0 0;">¶</div>
<div style="position:absolute;left:299.50px;top:429.30px;font-size:19px;line-height:21.831px;white-space:pre;color:#111;font-weight:700;transform:scaleX(0.9264);transform-origin:0 0;">¶</div>
<svg width="0" height="0" style="position:absolute"><defs><pattern id="zz" x="0" y="0" width="4" height="3" patternUnits="userSpaceOnUse"><path d="M-0.5 0.5L1.5 2.5L3.5 0.5L5.5 2.5" stroke="#f00" stroke-width="1.1" fill="none"/></pattern></defs></svg>
<div style="position:absolute;left:0;top:0;width:1435px;height:737px;overflow:hidden">
<div class="ln" style="top:470.45px;letter-spacing:0.850px"><span class="sq">Siquis<svg class="sqs" width="100%" height="3"><rect width="100%" height="3" fill="url(#zz)"/></svg></span>·<span class="sq">enim<svg class="sqs" width="100%" height="3"><rect width="100%" height="3" fill="url(#zz)"/></svg></span>·<span class="sq">militarium<svg class="sqs" width="100%" height="3"><rect width="100%" height="3" fill="url(#zz)"/></svg></span>·<span class="sq">vel<svg class="sqs" width="100%" height="3"><rect width="100%" height="3" fill="url(#zz)"/></svg></span>·<span class="sq"><span style="letter-spacing:1.25px">honoratorum</span><svg class="sqs" width="100%" height="3"><rect width="100%" height="3" fill="url(#zz)"/></svg></span>·<span class="sq"><svg class="sqs" width="100%" height="3"><rect width="100%" height="3" fill="url(#zz)"/></svg></span>¶</div>
<div class="ln" style="top:503.35px;width:850.5px;display:flex;justify-content:space-between;letter-spacing:0.850px"><span>Nec·</span><span><span class="sq">piget<svg class="sqs" width="100%" height="3"><rect width="100%" height="3" fill="url(#zz)"/></svg></span>·</span><span><span class="sq">dicere<svg class="sqs" width="100%" height="3"><rect width="100%" height="3" fill="url(#zz)"/></svg></span>·</span><span>avide·</span><span><span class="sq">magis<svg class="sqs" width="100%" height="3"><rect width="100%" height="3" fill="url(#zz)"/></svg></span>·</span><span><span class="sq">hanc<svg class="sqs" width="100%" height="3"><rect width="100%" height="3" fill="url(#zz)"/></svg></span>·</span><span><span class="sq">insulam<svg class="sqs" width="100%" height="3"><rect width="100%" height="3" fill="url(#zz)"/></svg></span>·</span><span>populum·</span><span><span class="sq">Romanum<svg class="sqs" width="100%" height="3"><rect width="100%" height="3" fill="url(#zz)"/></svg></span>·</span><span><span class="sq">invasisse<svg class="sqs" width="100%" height="3"><rect width="100%" height="3" fill="url(#zz)"/></svg></span>·</span><span><span class="sq">quam<svg class="sqs" width="100%" height="3"><rect width="100%" height="3" fill="url(#zz)"/></svg></span>·</span><span><span class="sq">iuste<svg class="sqs" width="100%" height="3"><rect width="100%" height="3" fill="url(#zz)"/></svg></span>.·</span><span><span class="sq">Ptolomaeo<svg class="sqs" width="100%" height="3"><rect width="100%" height="3" fill="url(#zz)"/></svg></span>·</span><span><span class="sq">enim<svg class="sqs" width="100%" height="3"><rect width="100%" height="3" fill="url(#zz)"/></svg></span>·</span><span><span class="sq">rege<svg class="sqs" width="100%" height="3"><rect width="100%" height="3" fill="url(#zz)"/></svg></span>·</span><span><span class="sq">foederato<svg class="sqs" width="100%" height="3"><rect width="100%" height="3" fill="url(#zz)"/></svg></span>·</span></div>
<div class="ln" style="top:520.15px;width:850.5px;display:flex;justify-content:space-between;letter-spacing:0.755px"><span><span class="sq">nobis<svg class="sqs" width="100%" height="3"><rect width="100%" height="3" fill="url(#zz)"/></svg></span>·</span><span>et·</span><span>socio·</span><span><span class="sq">ob<svg class="sqs" width="100%" height="3"><rect width="100%" height="3" fill="url(#zz)"/></svg></span>·</span><span><span class="sq">aerarii<svg class="sqs" width="100%" height="3"><rect width="100%" height="3" fill="url(#zz)"/></svg></span>·</span><span><span class="sq">nostri<svg class="sqs" width="100%" height="3"><rect width="100%" height="3" fill="url(#zz)"/></svg></span>·</span><span><span class="sq">angustias<svg class="sqs" width="100%" height="3"><rect width="100%" height="3" fill="url(#zz)"/></svg></span>·</span><span><span class="sq">iusso<svg class="sqs" width="100%" height="3"><rect width="100%" height="3" fill="url(#zz)"/></svg></span>·</span><span>sine·</span><span><span class="sq">ulla<svg class="sqs" width="100%" height="3"><rect width="100%" height="3" fill="url(#zz)"/></svg></span>·</span><span>culpa·</span><span><span class="sq">proscribi<svg class="sqs" width="100%" height="3"><rect width="100%" height="3" fill="url(#zz)"/></svg></span>·</span><span><span class="sq">ideoque<svg class="sqs" width="100%" height="3"><rect width="100%" height="3" fill="url(#zz)"/></svg></span>·</span><span><span class="sq">hausto<svg class="sqs" width="100%" height="3"><rect width="100%" height="3" fill="url(#zz)"/></svg></span>·</span><span><span class="sq">veneno<svg class="sqs" width="100%" height="3"><rect width="100%" height="3" fill="url(#zz)"/></svg></span>·</span><span><span class="sq">voluntaria<svg class="sqs" width="100%" height="3"><rect width="100%" height="3" fill="url(#zz)"/></svg></span>·</span><span>morte·</span><span><span class="sq">deleto<svg class="sqs" width="100%" height="3"><rect width="100%" height="3" fill="url(#zz)"/></svg></span>·</span></div>
<div class="ln" style="top:537.05px;width:850.5px;display:flex;justify-content:space-between;letter-spacing:0.666px"><span>et·</span><span><span class="sq">tributaria<svg class="sqs" width="100%" height="3"><rect width="100%" height="3" fill="url(#zz)"/></svg></span>·</span><span><span class="sq">facta<svg class="sqs" width="100%" height="3"><rect width="100%" height="3" fill="url(#zz)"/></svg></span>·</span><span>est·</span><span>et·</span><span><span class="sq">velut<svg class="sqs" width="100%" height="3"><rect width="100%" height="3" fill="url(#zz)"/></svg></span>·</span><span>hostiles·</span><span><span class="sq">eius<svg class="sqs" width="100%" height="3"><rect width="100%" height="3" fill="url(#zz)"/></svg></span>·</span><span><span class="sq">exuviae<svg class="sqs" width="100%" height="3"><rect width="100%" height="3" fill="url(#zz)"/></svg></span>·</span><span><span class="sq">classi<svg class="sqs" width="100%" height="3"><rect width="100%" height="3" fill="url(#zz)"/></svg></span>·</span><span><span class="sq">inpositae<svg class="sqs" width="100%" height="3"><rect width="100%" height="3" fill="url(#zz)"/></svg></span>·</span><span>in·</span><span><span class="sq">urbem<svg class="sqs" width="100%" height="3"><rect width="100%" height="3" fill="url(#zz)"/></svg></span>·</span><span><span class="sq">advectae<svg class="sqs" width="100%" height="3"><rect width="100%" height="3" fill="url(#zz)"/></svg></span>·</span><span><span class="sq">sunt<svg class="sqs" width="100%" height="3"><rect width="100%" height="3" fill="url(#zz)"/></svg></span>·</span><span>per·</span><span><span class="sq">Catonem<svg class="sqs" width="100%" height="3"><rect width="100%" height="3" fill="url(#zz)"/></svg></span>,·</span><span>nunc·</span><span><span class="sq">repetetur<svg class="sqs" width="100%" height="3"><rect width="100%" height="3" fill="url(#zz)"/></svg></span>·</span></div>
<div class="ln" style="top:553.95px;letter-spacing:0.850px">ordo·<span class="sq">gestorum<svg class="sqs" width="100%" height="3"><rect width="100%" height="3" fill="url(#zz)"/></svg></span>.¶</div>
<div class="ln" style="top:583.85px;width:850.5px;display:flex;justify-content:space-between;letter-spacing:0.850px"><span><span class="sq">Superatis<svg class="sqs" width="100%" height="3"><rect width="100%" height="3" fill="url(#zz)"/></svg></span>·</span><span><span class="sq">Tauri<svg class="sqs" width="100%" height="3"><rect width="100%" height="3" fill="url(#zz)"/></svg></span>·</span><span><span class="sq">montis<svg class="sqs" width="100%" height="3"><rect width="100%" height="3" fill="url(#zz)"/></svg></span>·</span><span><span class="sq">verticibus<svg class="sqs" width="100%" height="3"><rect width="100%" height="3" fill="url(#zz)"/></svg></span>·</span><span>qui·</span><span>ad·</span><span><span class="sq">solis<svg class="sqs" width="100%" height="3"><rect width="100%" height="3" fill="url(#zz)"/></svg></span>·</span><span><span class="sq">ortum<svg class="sqs" width="100%" height="3"><rect width="100%" height="3" fill="url(#zz)"/></svg></span>·</span><span><span class="sq">sublimius<svg class="sqs" width="100%" height="3"><rect width="100%" height="3" fill="url(#zz)"/></svg></span>·</span><span><span class="sq">attolluntur<svg class="sqs" width="100%" height="3"><rect width="100%" height="3" fill="url(#zz)"/></svg></span>,·</span><span><span class="sq">Cilicia<svg class="sqs" width="100%" height="3"><rect width="100%" height="3" fill="url(#zz)"/></svg></span>·</span><span><span class="sq">spatiis<svg class="sqs" width="100%" height="3"><rect width="100%" height="3" fill="url(#zz)"/></svg></span>·</span><span><span class="sq">porrigitur<svg class="sqs" width="100%" height="3"><rect width="100%" height="3" fill="url(#zz)"/></svg></span>·</span><span><span class="sq">late<svg class="sqs" width="100%" height="3"><rect width="100%" height="3" fill="url(#zz)"/></svg></span>·</span><span><span class="sq">distentis<svg class="sqs" width="100%" height="3"><rect width="100%" height="3" fill="url(#zz)"/></svg></span>·</span><span>dives·</span></div>
<div class="ln" style="top:600.85px;width:850.5px;display:flex;justify-content:space-between;letter-spacing:0.850px"><span>bonis·</span><span>omnibus·</span><span>terra,·</span><span><span class="sq">eiusque<svg class="sqs" width="100%" height="3"><rect width="100%" height="3" fill="url(#zz)"/></svg></span>·</span><span><span class="sq">lateri<svg class="sqs" width="100%" height="3"><rect width="100%" height="3" fill="url(#zz)"/></svg></span>·</span><span>dextro·</span><span><span class="sq">adnexa<svg class="sqs" width="100%" height="3"><rect width="100%" height="3" fill="url(#zz)"/></svg></span>·</span><span><span class="sq">Isauria<svg class="sqs" width="100%" height="3"><rect width="100%" height="3" fill="url(#zz)"/></svg></span>,·</span><span>pari·</span><span>sorte·</span><span><span class="sq">uberi<svg class="sqs" width="100%" height="3"><rect width="100%" height="3" fill="url(#zz)"/></svg></span>·</span><span>palmite·</span><span><span class="sq">viget<svg class="sqs" width="100%" height="3"><rect width="100%" height="3" fill="url(#zz)"/></svg></span>·</span><span>et·</span><span><span class="sq">frugibus<svg class="sqs" width="100%" height="3"><rect width="100%" height="3" fill="url(#zz)"/></svg></span>·</span><span><span class="sq">minutis<svg class="sqs" width="100%" height="3"><rect width="100%" height="3" fill="url(#zz)"/></svg></span>,·</span><span><span class="sq">quam<svg class="sqs" width="100%" height="3"><rect width="100%" height="3" fill="url(#zz)"/></svg></span>·</span></div>
<div class="ln" style="top:617.75px;letter-spacing:0.850px"><span class="sq">mediam<svg class="sqs" width="100%" height="3"><rect width="100%" height="3" fill="url(#zz)"/></svg></span>·<span class="sq">navigabile<svg class="sqs" width="100%" height="3"><rect width="100%" height="3" fill="url(#zz)"/></svg></span>·<span class="sq">flumen<svg class="sqs" width="100%" height="3"><rect width="100%" height="3" fill="url(#zz)"/></svg></span>·<span class="sq">Calycadnus<svg class="sqs" width="100%" height="3"><rect width="100%" height="3" fill="url(#zz)"/></svg></span>·<span class="sq">interscindit<svg class="sqs" width="100%" height="3"><rect width="100%" height="3" fill="url(#zz)"/></svg></span>.¶</div>
<div class="ln" style="top:649.25px;width:850.5px;display:flex;justify-content:space-between;letter-spacing:0.850px"><span><span class="sq">Dumque<svg class="sqs" width="100%" height="3"><rect width="100%" height="3" fill="url(#zz)"/></svg></span>·</span><span><span class="sq">ibi<svg class="sqs" width="100%" height="3"><rect width="100%" height="3" fill="url(#zz)"/></svg></span>·</span><span><span class="sq">diu<svg class="sqs" width="100%" height="3"><rect width="100%" height="3" fill="url(#zz)"/></svg></span>·</span><span><span class="sq">moratur<svg class="sqs" width="100%" height="3"><rect width="100%" height="3" fill="url(#zz)"/></svg></span>·</span><span><span class="sq">commeatus<svg class="sqs" width="100%" height="3"><rect width="100%" height="3" fill="url(#zz)"/></svg></span>·</span><span><span class="sq">opperiens<svg class="sqs" width="100%" height="3"><rect width="100%" height="3" fill="url(#zz)"/></svg></span>,·</span><span>quorum·</span><span><span class="sq">translationem<svg class="sqs" width="100%" height="3"><rect width="100%" height="3" fill="url(#zz)"/></svg></span>·</span><span>ex·</span><span><span class="sq">Aquitania<svg class="sqs" width="100%" height="3"><rect width="100%" height="3" fill="url(#zz)"/></svg></span>·</span><span>verni·</span><span><span class="sq">imbres<svg class="sqs" width="100%" height="3"><rect width="100%" height="3" fill="url(#zz)"/></svg></span>·</span><span><span class="sq">solito<svg class="sqs" width="100%" height="3"><rect width="100%" height="3" fill="url(#zz)"/></svg></span>·</span><span><span class="sq">crebriores<svg class="sqs" width="100%" height="3"><rect width="100%" height="3" fill="url(#zz)"/></svg></span>·</span></div>
<div class="ln" style="top:665.75px;width:850.5px;display:flex;justify-content:space-between;letter-spacing:0.783px"><span><span class="sq">prohibebant<svg class="sqs" width="100%" height="3"><rect width="100%" height="3" fill="url(#zz)"/></svg></span>·</span><span><span class="sq">auctique<svg class="sqs" width="100%" height="3"><rect width="100%" height="3" fill="url(#zz)"/></svg></span>·</span><span><span class="sq">torrentes<svg class="sqs" width="100%" height="3"><rect width="100%" height="3" fill="url(#zz)"/></svg></span>,·</span><span><span class="sq">Herculanus<svg class="sqs" width="100%" height="3"><rect width="100%" height="3" fill="url(#zz)"/></svg></span>·</span><span><span class="sq">advenit<svg class="sqs" width="100%" height="3"><rect width="100%" height="3" fill="url(#zz)"/></svg></span>·</span><span><span class="sq">protector<svg class="sqs" width="100%" height="3"><rect width="100%" height="3" fill="url(#zz)"/></svg></span>·</span><span><span class="sq">domesticus<svg class="sqs" width="100%" height="3"><rect width="100%" height="3" fill="url(#zz)"/></svg></span>,·</span><span><span class="sq">Hermogenis<svg class="sqs" width="100%" height="3"><rect width="100%" height="3" fill="url(#zz)"/></svg></span>·</span><span>ex·</span><span><span class="sq">magistro<svg class="sqs" width="100%" height="3"><rect width="100%" height="3" fill="url(#zz)"/></svg></span>·</span><span><span class="sq">equitum<svg class="sqs" width="100%" height="3"><rect width="100%" height="3" fill="url(#zz)"/></svg></span>·</span><span><span class="sq">filius<svg class="sqs" width="100%" height="3"><rect width="100%" height="3" fill="url(#zz)"/></svg></span>,·</span><span><span class="sq">apud<svg class="sqs" width="100%" height="3"><rect width="100%" height="3" fill="url(#zz)"/></svg></span>·</span></div>
<div class="ln" style="top:682.35px;width:850.5px;display:flex;justify-content:space-between;letter-spacing:0.776px"><span><span class="sq">Constantinopolim<svg class="sqs" width="100%" height="3"><rect width="100%" height="3" fill="url(#zz)"/></svg></span>,·</span><span>ut·</span><span>supra·</span><span><span class="sq">rettulimus<svg class="sqs" width="100%" height="3"><rect width="100%" height="3" fill="url(#zz)"/></svg></span>,·</span><span><span class="sq">populari<svg class="sqs" width="100%" height="3"><rect width="100%" height="3" fill="url(#zz)"/></svg></span>·</span><span><span class="sq">quondam<svg class="sqs" width="100%" height="3"><rect width="100%" height="3" fill="url(#zz)"/></svg></span>·</span><span><span class="sq">turbela<svg class="sqs" width="100%" height="3"><rect width="100%" height="3" fill="url(#zz)"/></svg></span>·</span><span><span class="sq">discerpti<svg class="sqs" width="100%" height="3"><rect width="100%" height="3" fill="url(#zz)"/></svg></span>,·</span><span><span class="sq">quo<svg class="sqs" width="100%" height="3"><rect y="0" width="100%" height="1" fill="#3b6fc6"/><rect y="2" width="100%" height="1" fill="#3b6fc6"/></svg></span>·</span><span><span class="sq">verissime<svg class="sqs" width="100%" height="3"><rect width="100%" height="3" fill="url(#zz)"/></svg></span>·</span><span><span class="sq">referente<svg class="sqs" width="100%" height="3"><rect width="100%" height="3" fill="url(#zz)"/></svg></span>·</span><span><span class="sq">quae<svg class="sqs" width="100%" height="3"><rect width="100%" height="3" fill="url(#zz)"/></svg></span>·</span><span>Gallus·</span><span><span class="sq">egerat<svg class="sqs" width="100%" height="3"><rect width="100%" height="3" fill="url(#zz)"/></svg></span>,·</span></div>
<div class="ln" style="top:698.95px;letter-spacing:0.850px"><span class="sq">damnis<svg class="sqs" width="100%" height="3"><rect width="100%" height="3" fill="url(#zz)"/></svg></span>·super·<span class="sq">praeteritis<svg class="sqs" width="100%" height="3"><rect width="100%" height="3" fill="url(#zz)"/></svg></span>·<span class="sq">maerens<svg class="sqs" width="100%" height="3"><rect width="100%" height="3" fill="url(#zz)"/></svg></span>·et·<span class="sq">futurorum<svg class="sqs" width="100%" height="3"><rect width="100%" height="3" fill="url(#zz)"/></svg></span>·<span class="sq">timore<svg class="sqs" width="100%" height="3"><rect width="100%" height="3" fill="url(#zz)"/></svg></span>·<span class="sq">suspensus<svg class="sqs" width="100%" height="3"><rect width="100%" height="3" fill="url(#zz)"/></svg></span>·<span class="sq">angorem<svg class="sqs" width="100%" height="3"><rect width="100%" height="3" fill="url(#zz)"/></svg></span>·<span class="sq">animi<svg class="sqs" width="100%" height="3"><rect width="100%" height="3" fill="url(#zz)"/></svg></span>·<span class="sq">quam<svg class="sqs" width="100%" height="3"><rect width="100%" height="3" fill="url(#zz)"/></svg></span>·<span class="sq">diu<svg class="sqs" width="100%" height="3"><rect width="100%" height="3" fill="url(#zz)"/></svg></span>·<span class="sq">potuit<svg class="sqs" width="100%" height="3"><rect width="100%" height="3" fill="url(#zz)"/></svg></span>·<span class="sq">emendabat<svg class="sqs" width="100%" height="3"><rect width="100%" height="3" fill="url(#zz)"/></svg></span>.¶</div>
<div class="ln" style="top:730.25px;width:850.5px;display:flex;justify-content:space-between;letter-spacing:0.850px"><span>Ibi·</span><span><span class="sq">victu<svg class="sqs" width="100%" height="3"><rect width="100%" height="3" fill="url(#zz)"/></svg></span>·</span><span><span class="sq">recreati<svg class="sqs" width="100%" height="3"><rect width="100%" height="3" fill="url(#zz)"/></svg></span>·</span><span>et·</span><span><span class="sq">quiete<svg class="sqs" width="100%" height="3"><rect width="100%" height="3" fill="url(#zz)"/></svg></span>,·</span><span><span class="sq">postquam<svg class="sqs" width="100%" height="3"><rect width="100%" height="3" fill="url(#zz)"/></svg></span>·</span><span><span class="sq">abierat<svg class="sqs" width="100%" height="3"><rect width="100%" height="3" fill="url(#zz)"/></svg></span>·</span><span><span class="sq">timor<svg class="sqs" width="100%" height="3"><rect width="100%" height="3" fill="url(#zz)"/></svg></span>,·</span><span><span class="sq">vicos<svg class="sqs" width="100%" height="3"><rect width="100%" height="3" fill="url(#zz)"/></svg></span>·</span><span><span class="sq">opulentos<svg class="sqs" width="100%" height="3"><rect width="100%" height="3" fill="url(#zz)"/></svg></span>·</span><span><span class="sq">adorti<svg class="sqs" width="100%" height="3"><rect width="100%" height="3" fill="url(#zz)"/></svg></span>·</span><span><span class="sq">equestrium<svg class="sqs" width="100%" height="3"><rect width="100%" height="3" fill="url(#zz)"/></svg></span>·</span><span><span class="sq">adventu<svg class="sqs" width="100%" height="3"><rect width="100%" height="3" fill="url(#zz)"/></svg></span>·</span><span><span class="sq">cohortium<svg class="sqs" width="100%" height="3"><rect width="100%" height="3" fill="url(#zz)"/></svg></span>,·</span><span><span class="sq">quos<svg class="sqs" width="100%" height="3"><rect width="100%" height="3" fill="url(#zz)"/></svg></span>·</span><span><span class="sq">casu<svg class="sqs" width="100%" height="3"><rect width="100%" height="3" fill="url(#zz)"/></svg></span>·</span></div>
</div>
<div style="position:absolute;left:453px;top:247px;width:528px;height:236px;background:#f0f0f0;border:1px solid #707070;box-sizing:border-box;box-shadow:0 2px 14px 2px rgba(0,0,0,0.22)"></div>
<div style="position:absolute;left:454px;top:248px;width:526px;height:30px;background:#fff"></div>
<div style="position:absolute;left:462.20px;top:256.75px;font-size:12px;line-height:13.788px;white-space:pre;color:#000;font-weight:400;transform:scaleX(0.9706);transform-origin:0 0;-webkit-text-stroke:0.2px #000;">Sélectionner le tableau</div>
<div style="position:absolute;left:909.50px;top:256.95px;font-size:12px;line-height:13.788px;white-space:pre;color:#000;font-weight:400;transform:scaleX(0.8224);transform-origin:0 0;-webkit-text-stroke:0.2px #000;">?</div>
<svg style="position:absolute;left:951px;top:256px;" width="12" height="12" viewBox="0 0 12 12" fill="none"><path d="M0.5 0.5L11.5 11.5M11.5 0.5L0.5 11.5" stroke="#111" stroke-width="1"/></svg>
<div style="position:absolute;left:460px;top:285px;width:478px;height:161px;background:#fff;border:1px solid #828790;box-sizing:border-box"></div>
<div style="position:absolute;left:562px;top:287px;width:1px;height:24px;background:#e5e5e5"></div>
<div style="position:absolute;left:633px;top:287px;width:1px;height:24px;background:#e5e5e5"></div>
<div style="position:absolute;left:707px;top:287px;width:1px;height:24px;background:#e5e5e5"></div>
<div style="position:absolute;left:781px;top:287px;width:1px;height:24px;background:#e5e5e5"></div>
<div style="position:absolute;left:468.30px;top:292.95px;font-size:12px;line-height:13.788px;white-space:pre;color:#000;font-weight:400;transform:scaleX(0.9273);transform-origin:0 0;-webkit-text-stroke:0.2px #000;">Nom</div>
<div style="position:absolute;left:569.50px;top:292.95px;font-size:12px;line-height:13.788px;white-space:pre;color:#000;font-weight:400;transform:scaleX(0.9662);transform-origin:0 0;-webkit-text-stroke:0.2px #000;">Description</div>
<div style="position:absolute;left:640.50px;top:292.95px;font-size:12px;line-height:13.788px;white-space:pre;color:#000;font-weight:400;transform:scaleX(0.9874);transform-origin:0 0;-webkit-text-stroke:0.2px #000;">Modifiée le</div>
<div style="position:absolute;left:714.50px;top:292.95px;font-size:12px;line-height:13.788px;white-space:pre;color:#000;font-weight:400;transform:scaleX(0.8885);transform-origin:0 0;-webkit-text-stroke:0.2px #000;">Créée le</div>
<div style="position:absolute;left:788.00px;top:292.95px;font-size:12px;line-height:13.788px;white-space:pre;color:#000;font-weight:400;transform:scaleX(0.8533);transform-origin:0 0;-webkit-text-stroke:0.2px #000;">Type</div>
<svg style="position:absolute;left:468px;top:313px;" width="12" height="12" viewBox="0 0 12 12" fill="none"><rect x="0" y="0" width="12" height="12" fill="#0b2d6b"/><rect x="0" y="0" width="12" height="2" fill="#0033a8"/><rect x="1" y="2" width="10" height="9" fill="#a3cdf3"/><path d="M2 3.5H4M5 3.5H7M8 3.5H10M2 5.5H4M5 5.5H7M8 5.5H10M2 7.5H4M5 7.5H7M8 7.5H10M2 9.5H4M5 9.5H7M8 9.5H10" stroke="#0b2d6b" stroke-width="1"/></svg>
<div style="position:absolute;left:482px;top:311px;width:45px;height:17px;background:#0078d7;border:1px dotted #ff8c1a;box-sizing:border-box"></div>
<div style="position:absolute;left:484.50px;top:313.55px;font-size:12px;line-height:13.788px;white-space:pre;color:#fff;font-weight:400;transform:scaleX(0.9274);transform-origin:0 0;">Feuil1$</div>
<div style="position:absolute;left:640.50px;top:313.55px;font-size:12px;line-height:13.788px;white-space:pre;color:#000;font-weight:400;transform:scaleX(0.9052);transform-origin:0 0;-webkit-text-stroke:0.2px #000;">12:00:00 AM</div>
<div style="position:absolute;left:714.50px;top:313.55px;font-size:12px;line-height:13.788px;white-space:pre;color:#000;font-weight:400;transform:scaleX(0.9052);transform-origin:0 0;-webkit-text-stroke:0.2px #000;">12:00:00 AM</div>
<div style="position:absolute;left:788.00px;top:313.55px;font-size:12px;line-height:13.788px;white-space:pre;color:#000;font-weight:400;transform:scaleX(0.7650);transform-origin:0 0;-webkit-text-stroke:0.2px #000;">TABLE</div>
<div style="position:absolute;left:461px;top:428px;width:476px;height:16px;background:#f0f0f0"></div>
<div style="position:absolute;left:479px;top:428px;width:400px;height:15px;background:#cdcdcd"></div>
<svg style="position:absolute;left:467px;top:431px;" width="7" height="9" viewBox="0 0 7 9" fill="none"><path d="M5.5 0.8L1.8 4.5L5.5 8.2" stroke="#606060" stroke-width="1.6"/></svg>
<svg style="position:absolute;left:924px;top:431px;" width="7" height="9" viewBox="0 0 7 9" fill="none"><path d="M1.5 0.8L5.2 4.5L1.5 8.2" stroke="#606060" stroke-width="1.6"/></svg>
<div style="position:absolute;left:460px;top:460px;width:13px;height:13px;background:#fff;border:1px solid #333;box-sizing:border-box"></div>
<svg style="position:absolute;left:460px;top:460px;" width="13" height="13" viewBox="0 0 13 13" fill="none"><path d="M2.5 6.5L5.2 9.3L10.8 3.2" stroke="#222" stroke-width="1.2"/></svg>
<div style="position:absolute;left:477.60px;top:460.65px;font-size:12px;line-height:13.788px;white-space:pre;color:#000;font-weight:400;transform:scaleX(0.9616);transform-origin:0 0;-webkit-text-stroke:0.2px #000;">La première ligne de données contient les en-têtes de colonnes</div>
<div style="position:absolute;left:497px;top:472px;width:6px;height:1px;background:#000"></div>
<div style="position:absolute;left:815px;top:452px;width:74px;height:22px;background:#e1e1e1;border:2px solid #0078d7;box-sizing:border-box"></div>
<div style="position:absolute;left:844.75px;top:456.95px;font-size:12px;line-height:13.788px;white-space:pre;color:#000;font-weight:400;transform:scaleX(0.8360);transform-origin:0 0;-webkit-text-stroke:0.2px #000;">OK</div>
<div style="position:absolute;left:899px;top:452px;width:74px;height:22px;background:#e1e1e1;border:1px solid #adadad;box-sizing:border-box"></div>
<div style="position:absolute;left:915.50px;top:456.95px;font-size:12px;line-height:13.788px;white-space:pre;color:#000;font-weight:400;transform:scaleX(0.9909);transform-origin:0 0;-webkit-text-stroke:0.2px #000;">Annuler</div>
<svg style="position:absolute;left:969px;top:470px;" width="11" height="11" viewBox="0 0 11 11" fill="none"><path d="M10 2L2 10M10 6L6 10" stroke="#a0a0a0" stroke-width="1"/></svg>
<div style="position:absolute;left:0px;top:737px;width:1435px;height:1px;background:#c8c6c4"></div>
<div style="position:absolute;left:0px;top:738px;width:1435px;height:21px;background:#f3f2f1"></div>
<div style="position:absolute;left:0px;top:759px;width:1435px;height:1px;background:#6f6f6f"></div>
<div style="position:absolute;left:0px;top:760px;width:1435px;height:3px;background:#d5dfee"></div>
<div style="position:absolute;left:6.00px;top:743.01px;font-size:11.5px;line-height:13.213px;white-space:pre;color:#444;font-weight:400;transform:scaleX(0.9276);transform-origin:0 0;">Page 1 sur 1</div>
<div style="position:absolute;left:87.00px;top:743.01px;font-size:11.5px;line-height:13.213px;white-space:pre;color:#444;font-weight:400;transform:scaleX(0.9575);transform-origin:0 0;">247 mots</div>
<svg style="position:absolute;left:152px;top:742px;" width="15" height="14" viewBox="0 0 15 14" fill="none"><path d="M6 0.75H0.75V11.75H6 M6 0.75H12.5V5 M6 0.75V5 M6 8V11.75" stroke="#333" stroke-width="1.3"/><path d="M8 7.5L13.5 13M13.5 7.5L8 13" stroke="#333" stroke-width="1.1"/></svg>
<svg style="position:absolute;left:1063px;top:742px;" width="15" height="13" viewBox="0 0 15 13" fill="none"><path d="M0.5 3V0.5H3 M11.5 0.5H14V3 M14 9.5V12H11.5 M3 12H0.5V9.5" stroke="#444"/><path d="M3.5 2.5H8.5L11 5V10.5H3.5Z M8.5 2.5V5H11" stroke="#444"/></svg>
<div style="position:absolute;left:1080.30px;top:743.01px;font-size:11.5px;line-height:13.213px;white-space:pre;color:#444;font-weight:400;transform:scaleX(0.9416);transform-origin:0 0;">Focus</div>
<svg style="position:absolute;left:1135px;top:741px;" width="13" height="13" viewBox="0 0 13 13" fill="none"><path d="M0.5 0.5H5.5L6.5 1.5L7.5 0.5H12.5V12.5H7.5L6.5 13L5.5 12.5H0.5Z" fill="#fafafa" stroke="#333"/><path d="M6.5 1.5V12.5" stroke="#333"/><path d="M2 3.5H5M2 5.5H5M2 7.5H5M2 9.5H5M8 3.5H11M8 5.5H11M8 7.5H11M8 9.5H11" stroke="#333"/></svg>
<div style="position:absolute;left:1162px;top:738px;width:40px;height:21px;background:#c8c6c4"></div>
<svg style="position:absolute;left:1175px;top:741px;" width="13" height="14" viewBox="0 0 13 14" fill="none"><rect x="1.5" y="0.5" width="10" height="13" fill="#f2f2f2" stroke="#222"/><path d="M3 2.5H10M3 4.5H10M3 6.5H10M3 8.5H10M3 10.5H10" stroke="#222"/></svg>
<svg style="position:absolute;left:1214px;top:741px;" width="16" height="16" viewBox="0 0 16 16" fill="none"><path d="M6 13.5H0.5V0.5H13.5V5" fill="#fafafa" stroke="#333"/><path d="M2 2.5H12M2 4.5H8M2 6.5H6M2 8.5H6M2 10.5H5" stroke="#333"/><circle cx="10.5" cy="9.5" r="4.5" fill="#444"/><path d="M6.5 9.5H14.5" stroke="#eee" stroke-width="1.2"/><path d="M10.5 5.5V13.5" stroke="#eee" stroke-width="0.6"/></svg>
<div style="position:absolute;left:1248px;top:748px;width:8px;height:1px;background:#444"></div>
<div style="position:absolute;left:1261px;top:748px;width:100px;height:1px;background:#a8a8a8"></div>
<div style="position:absolute;left:1311px;top:745px;width:1px;height:7px;background:#a8a8a8"></div>
<div style="position:absolute;left:1314px;top:743px;width:5px;height:11px;background:#707070"></div>
<div style="position:absolute;left:1366px;top:748px;width:8px;height:1px;background:#444"></div>
<div style="position:absolute;left:1369.5px;top:744px;width:1px;height:9px;background:#444"></div>
<div style="position:absolute;left:1386.20px;top:743.01px;font-size:11.5px;line-height:13.213px;white-space:pre;color:#444;font-weight:400;transform:scaleX(0.9046);transform-origin:0 0;">140 %</div>
</body></html>
